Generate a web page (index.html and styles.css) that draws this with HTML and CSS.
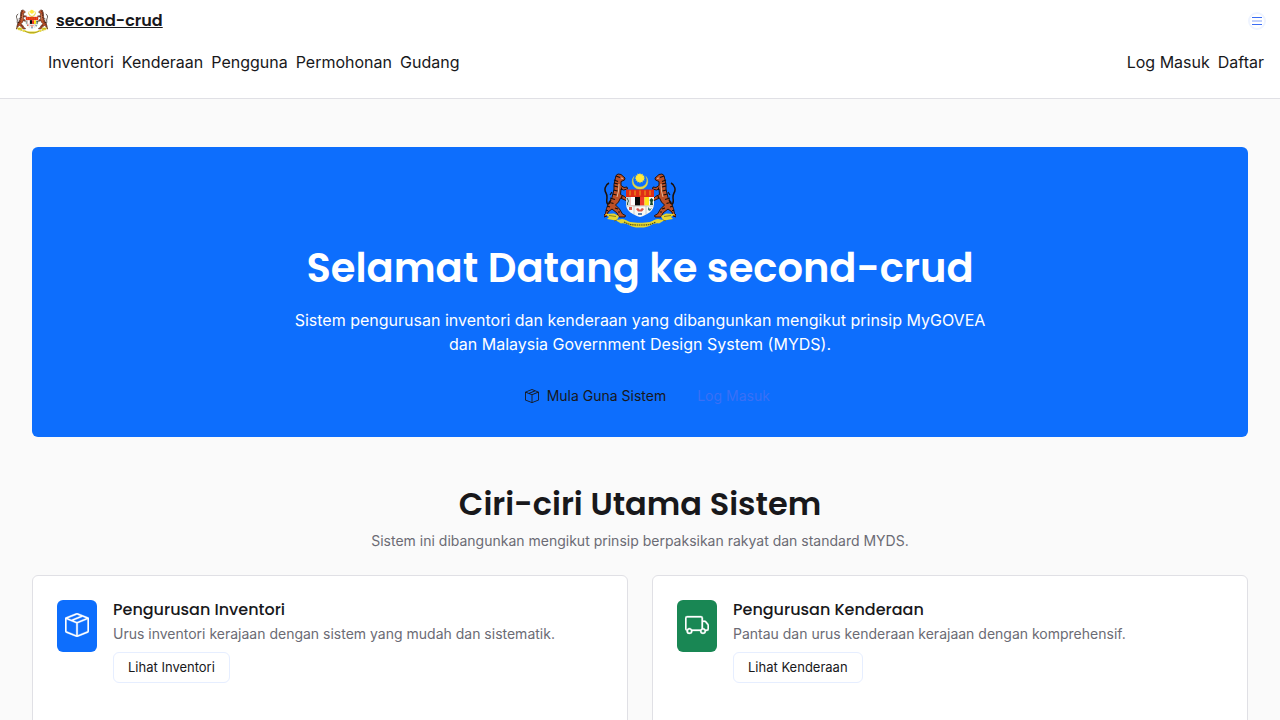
FILE: index.html
```html
<!DOCTYPE html>
<html lang="ms">
<head>
<meta charset="utf-8">
<title>second-crud</title>
<link rel="stylesheet" href="styles.css">
</head>
<body>
<svg class="sprite" aria-hidden="true">
  <symbol id="crest" viewBox="0 0 72 56">
    <g id="tiger">
      <path d="M5 33C0 31 5 26 2 21 0 18 1 13 5 11" fill="none" stroke="#1c0f08" stroke-width="1.500"/>
      <path d="M12 3.500l2-1.500 3 .5 4 3.500-.5 2-3.500 1.500 0 4 3 2 3-.5.5 2-4 1-2.500-1-.5 5.500 4 2 3 3-1.500 1-5.500-2.500-2 4-3 3 4 4 3 5 3 1.500-.5 1.500H15l-2-4-5-4-4 3-1 4-3 1 0-2 1.500-1.500 1-5 2.500-6 3-5 2-8 0-5z" fill="#bd5028" stroke="#26120c" stroke-width="1" stroke-linejoin="round"/>
      <path d="M12 4l4 1.500M10 8l4 1.500M10 11l4 1M10 14l4 1M9.500 18l4 1M8.500 22l4 1M6 26l5 1.500M4.500 30l5 1.500M3 34l3 1M11 36l3 1M2 38.500l2 0M14 40l2 0M17.500 15.500l0 2.500M18 24l-.5 2M8 20l-2 3M7 28l-2 4" stroke="#180e0b" stroke-width="1.200"/>
      <path d="M17 6l2 .5M15 12l-.5 7-1.500 6" fill="none" stroke="#efd6b5" stroke-width=".8"/>
    </g>
    <use href="#tiger" transform="translate(72 0) scale(-1 1)"/>
    <path d="M30 4.500A7.800 7.800 0 1 0 42 4.500A7 7 0 1 1 30 4.500z" fill="#e8d83c" stroke="#e8d83c" stroke-width=".5"/>
    <path d="M36 1l.9 1.500 1.700-.7.1 1.800 1.800.1-.7 1.700L41.500 6l-1.700.8.7 1.700-1.800.1-.1 1.800-1.700-.7L36 11.500l-.9-1.700-1.700.7-.1-1.800-1.800-.1.7-1.700L30.500 6l1.700-.8-.7-1.700 1.800-.1.1-1.800 1.700.7z" fill="#ffe93b"/>
    <path d="M22 18h28v14c0 7-7 11-14 13-7-2-14-6-14-13z" fill="#f8f8f4"/>
    <path d="M22 17.500h28V25H22z" fill="#e02d16"/>
    <path d="M26 18.500v5M31 18.500v5M36 18.500v5M41 18.500v5M46 18.500v5" stroke="#f2a719" stroke-width="1"/>
    <path d="M22 25h4.500v8.500H22z" fill="#cfd9dc"/><path d="M26.500 25h4.500v8.500h-4.500z" fill="#ee3a2a"/>
    <path d="M31 25h5v8.500h-5z" fill="#090909"/><path d="M36 25h4.500v8.500H36z" fill="#ee3a2a"/>
    <path d="M40.500 25h4.500v8.500h-4.500z" fill="#ffe51b"/>
    <path d="M26.500 25h4.500v8.500h-4.500z" fill="#fff"/>
    <path d="M47.500 26l2 2-1 2 .5 3h-3l.5-3-1-2z" fill="#174a2b"/>
    <path d="M23 26l1.500 3-1 2v2" fill="none" stroke="#315a49"/>
    <path d="M22 34h28M30 34v8.500M42 34v8.500" stroke="#a8aeb0" stroke-width=".6"/>
    <path d="M25 35h3v3h-3zM32 37l2-1 2 2 2-2 2 1-2 2.500h-4z" fill="#d8564b"/>
    <path d="M44 35l2 2 2-1-2 3-2-1z" fill="#3b777a"/><path d="M34 41h4v2h-4z" fill="#5d82ad"/>
    <path d="M1 42l9-.5 5 2.500-2 4 5-1c4 .500 5 2 8 3 6 1 14 1 20 0 3-1 4-2.500 8-3l5 1-2-4 5-2.500 9 .5-4 3 2 2-9 1.500-5 3c-6-1-8 3-15 4H32c-7-1-9-5-15-4l-5-3-9-1.500 2-2z" fill="#e6d730"/>
    <path d="M5 43.500l7 1M67 43.500l-7 1M13 48l-3 1M59 48l3 1" fill="none" stroke="#706718" stroke-width=".8"/>
    <path d="M20 50c4 2 7 3 12 3h8c5 0 8-1 12-3" fill="none" stroke="#4d4912" stroke-width="1.200" stroke-dasharray="1.500 .7"/>
  </symbol>
  <symbol id="box" viewBox="0 0 16 16"><path d="M8.186 1.113a.5.5 0 0 0-.372 0L1.846 3.500l2.404.961L10.404 2zm3.564 1.426L5.596 5 8 5.961 14.154 3.500zm3.250 1.700-6.500 2.600v7.922l6.500-2.600V4.240zM7.500 14.762V6.838L1 4.239v7.923zM7.443.184a1.500 1.500 0 0 1 1.114 0l7.129 2.852A.5.5 0 0 1 16 3.500v8.662a1 1 0 0 1-.629.928l-7.185 2.874a.5.5 0 0 1-.372 0L.63 13.090a1 1 0 0 1-.63-.928V3.500a.5.5 0 0 1 .314-.464z"/></symbol>
  <symbol id="truck" viewBox="0 0 16 16"><path d="M0 3.500A1.500 1.500 0 0 1 1.500 2h9A1.500 1.500 0 0 1 12 3.500V5h1.020a1.500 1.500 0 0 1 1.170.563l1.481 1.850a1.500 1.500 0 0 1 .329.938V10.500a1.500 1.500 0 0 1-1.500 1.500H14a2 2 0 1 1-4 0H5a2 2 0 1 1-3.998-.085A1.500 1.500 0 0 1 0 10.500zm1.294 7.456A2 2 0 0 1 4.732 11h5.536a2 2 0 0 1 .732-.732V3.500a.5.5 0 0 0-.5-.5h-9a.5.5 0 0 0-.5.5v7a.5.5 0 0 0 .294.456M12 10a2 2 0 0 1 1.732 1h.768a.5.5 0 0 0 .5-.5V8.350a.5.5 0 0 0-.11-.312l-1.480-1.850A.5.5 0 0 0 13.020 6H12zm-9 1a1 1 0 1 0 0 2 1 1 0 0 0 0-2m9 0a1 1 0 1 0 0 2 1 1 0 0 0 0-2"/></symbol>
</svg>
<header class="header">
  <div class="brand-row">
    <a class="brand" href="#"><svg class="brand-crest"><use href="#crest"/></svg><span class="brand-name">second-crud</span></a>
    <button class="menu-button" aria-label="Menu"><svg viewBox="0 0 10 10"><path d="M0 1.500h10M0 8.500h10" stroke="#3a6cf4"/><path d="M0 5h10" stroke="#c2d0fb" stroke-width="2"/></svg></button>
  </div>
  <nav class="nav">
    <div class="links links-main"><a>Inventori</a><a>Kenderaan</a><a>Pengguna</a><a>Permohonan</a><a>Gudang</a></div>
    <div class="links"><a>Log Masuk</a><a>Daftar</a></div>
  </nav>
</header>
<main class="main">
  <section class="hero">
    <svg class="hero-crest"><use href="#crest"/></svg>
    <h1 class="hero-title">Selamat Datang ke second-crud</h1>
    <p class="hero-text">Sistem pengurusan inventori dan kenderaan yang dibangunkan mengikut prinsip MyGOVEA dan Malaysia Government Design System (MYDS).</p>
    <div class="actions">
      <a class="action"><svg class="action-icon"><use href="#box"/></svg>Mula Guna Sistem</a>
      <a class="action action-login">Log Masuk</a>
    </div>
  </section>
  <section class="features">
    <h2 class="features-title">Ciri-ciri Utama Sistem</h2>
    <p class="features-text">Sistem ini dibangunkan mengikut prinsip berpaksikan rakyat dan standard MYDS.</p>
    <div class="cards">
      <article class="card">
        <div class="tile tile-blue"><svg><use href="#box"/></svg></div>
        <div class="card-body"><h3 class="card-title">Pengurusan Inventori</h3><p class="card-text">Urus inventori kerajaan dengan sistem yang mudah dan sistematik.</p><a class="card-link">Lihat Inventori</a></div>
      </article>
      <article class="card">
        <div class="tile tile-green"><svg><use href="#truck"/></svg></div>
        <div class="card-body"><h3 class="card-title">Pengurusan Kenderaan</h3><p class="card-text">Pantau dan urus kenderaan kerajaan dengan komprehensif.</p><a class="card-link">Lihat Kenderaan</a></div>
      </article>
    </div>
  </section>
</main>
</body>
</html>
```
FILE: styles.css
```css
* { box-sizing: border-box; }
html { overflow: hidden; }
body { margin: 0; height: 720px; overflow: hidden; background: #fafafa; color: #18181b; font: 16px/24px Inter, sans-serif; }
h1, h2, h3, p { margin: 0; }
.sprite { position: absolute; width: 0; height: 0; }
.header { height: 99px; background: #fff; border-bottom: 1px solid #e0e0e5; padding: 8px 16px; }
.brand-row { display: flex; justify-content: space-between; align-items: center; height: 26px; }
.brand { display: flex; align-items: center; gap: 8px; color: inherit; }
.brand-crest { width: 32px; height: 25px; }
.brand-name, .hero-title, .features-title, .card-title { font-family: Poppins, Inter, sans-serif; }
.brand-name { font-weight: 600; font-size: 16px; line-height: 24px; }
.menu-button { display: flex; align-items: center; justify-content: center; width: 18px; height: 18px; margin-right: -2px; padding: 0; border: 2px solid #eff4ff; border-radius: 50%; background: #fff; }
.menu-button svg { width: 10px; height: 10px; flex: none; }
.nav { display: flex; justify-content: space-between; padding-top: 16px; }
.links { display: flex; gap: 8px; }
.links-main { padding-left: 32px; }
.main { padding: 48px 32px 0; }
.hero { display: flex; flex-direction: column; align-items: center; height: 290px; padding-top: 25px; border-radius: 6px; background: #0d6efd; color: #fff; text-align: center; }
.hero-crest { width: 72px; height: 56px; flex: none; }
.hero-title { margin-top: 16px; font-size: 40px; font-weight: 600; line-height: 48px; white-space: nowrap; }
.hero-text { width: 700px; margin-top: 16px; }
.actions { display: flex; gap: 3px; margin: 20px 0 0 15px; font-size: 14px; line-height: 20px; color: #18181b; }
.action { display: flex; align-items: center; gap: 7.5px; padding: 10px 14px; }
.action-login { color: #3a70f6; }
.action-icon { width: 14px; height: 14px; fill: currentColor; }
.features { padding-top: 47px; text-align: center; }
.features-title { font-size: 32px; font-weight: 600; line-height: 40px; }
.features-text { margin-top: 7px; font-size: 14px; line-height: 20px; color: #6b6b74; }
.cards { display: grid; grid-template-columns: 1fr 1fr; gap: 24px; margin-top: 24px; text-align: left; }
.card { display: flex; align-items: flex-start; gap: 16px; height: 180px; padding: 24px; border: 1px solid #e0e0e5; border-radius: 6px; background: #fff; }
.tile { display: flex; align-items: center; justify-content: center; width: 40px; height: 52px; padding-bottom: 2px; border-radius: 6px; fill: #fff; stroke: #fff; stroke-width: .2px; }
.tile svg { width: 24px; height: 24px; }
.tile-blue { background: #0d6efd; }
.tile-green { background: #198754; }
.card-title { font-size: 16px; font-weight: 500; line-height: 20px; }
.card-text { margin-top: 4px; font-size: 14px; line-height: 20px; color: #6b6b74; }
.card-link { display: inline-block; margin-top: 8px; padding: 4px 14px 5px; border: 1px solid #e6eeff; border-radius: 6px; font-size: 13px; line-height: 20px; }
```
